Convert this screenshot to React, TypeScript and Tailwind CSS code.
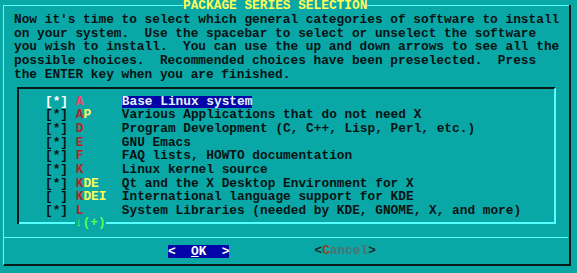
import React from "react";

type Pkg = {
  on: boolean;
  tag: string;
  desc: string;
};

const packages: Pkg[] = [
  { on: true, tag: "A", desc: "Base Linux system" },
  { on: true, tag: "AP", desc: "Various Applications that do not need X" },
  { on: true, tag: "D", desc: "Program Development (C, C++, Lisp, Perl, etc.)" },
  { on: true, tag: "E", desc: "GNU Emacs" },
  { on: true, tag: "F", desc: "FAQ lists, HOWTO documentation" },
  { on: true, tag: "K", desc: "Linux kernel source" },
  { on: true, tag: "KDE", desc: "Qt and the X Desktop Environment for X" },
  { on: false, tag: "KDEI", desc: "International language support for KDE" },
  { on: true, tag: "L", desc: "System Libraries (needed by KDE, GNOME, X, and more)" },
];

const intro = [
  "Now it's time to select which general categories of software to install",
  "on your system.  Use the spacebar to select or unselect the software",
  "you wish to install.  You can use the up and down arrows to see all the",
  "possible choices.  Recommended choices have been preselected.  Press",
  "the ENTER key when you are finished.",
];

const PkgRow = ({ pkg, active }: { pkg: Pkg; active: boolean }) => {
  const first = pkg.tag.slice(0, 1);
  const rest = pkg.tag.slice(1);
  const pad = " ".repeat(6 - pkg.tag.length);
  return (
    <div className="flex whitespace-pre">
      <span className={active ? "text-white" : ""}>{pkg.on ? "[*] " : "[ ] "}</span>
      <span className={active ? "text-[#ff3f6a]" : "text-[#b02424]"}>{first}</span>
      <span className="text-[#ffff55]">{rest}</span>
      <span>{pad}</span>
      {active ? (
        <span className="mt-[1px] h-[12px] bg-[#0404a8] leading-[12px] text-[#e4f2ff]">
          {pkg.desc}
        </span>
      ) : (
        <span>{pkg.desc}</span>
      )}
    </div>
  );
};

export default function App() {
  return (
    <div className="h-[273px] w-[577px] overflow-hidden bg-[#0aa7a7] pl-[3px] pt-[5px] font-['Liberation_Mono','DejaVu_Sans_Mono',monospace] text-[12.8px] font-bold leading-[13.65px] text-[#071313]">
      <div className="flex h-[261px] w-[568px] flex-col border-b-2 border-l border-r-2 border-b-[#061a1a] border-l-[#55ffff] border-r-[#061a1a]">
        {/* title bar */}
        <div className="flex h-px items-center">
          <div className="h-px w-[179px] bg-[#55ffff]" />
          <span className="whitespace-pre leading-[10px] text-[#ffff55]">PACKAGE SERIES SELECTION</span>
          <div className="h-px flex-1 bg-[#55ffff]" />
        </div>

        <div className="mt-[7px] whitespace-pre pl-[10px]">
          {intro.map((line) => (
            <div key={line}>{line}</div>
          ))}
        </div>

        {/* package list */}
        <div className="ml-[13px] mt-[5.5px] flex w-[539px] flex-col border-l-2 border-r-2 border-t-2 border-l-[#061a1a] border-r-[#55ffff] border-t-[#061a1a] pl-[26px] pt-[6px]">
          {packages.map((p, i) => (
            <PkgRow key={p.tag} pkg={p} active={i === 0} />
          ))}
          <div className="-ml-[26px] mt-[4px] flex h-[2px] items-center">
            <div className="h-[2px] w-[56px] bg-[#55ffff]" />
            <span className="whitespace-pre leading-[10px] text-[#55ff55]">↓(+)</span>
            <div className="h-[2px] flex-1 bg-[#55ffff]" />
          </div>
        </div>

        <div className="mt-[13.5px] h-px w-[564px] bg-[#55ffff]" />

        {/* buttons */}
        <div className="mt-[6px] flex h-[13.65px] items-center whitespace-pre pl-[164px]">
          <span className="h-[13px] bg-[#0404a8] leading-[13px] text-white">
            {"<  "}
            <span className="underline">O</span>
            {"K  >"}
          </span>
          <span className="ml-[85px]">
            <span className="text-[#1c2a2a]">{"<"}</span>
            <span className="text-[#8a4622]">C</span>
            <span className="text-[#4f7272]">ancel</span>
            <span className="text-[#1c2a2a]">{">"}</span>
          </span>
        </div>
      </div>
    </div>
  );
}
